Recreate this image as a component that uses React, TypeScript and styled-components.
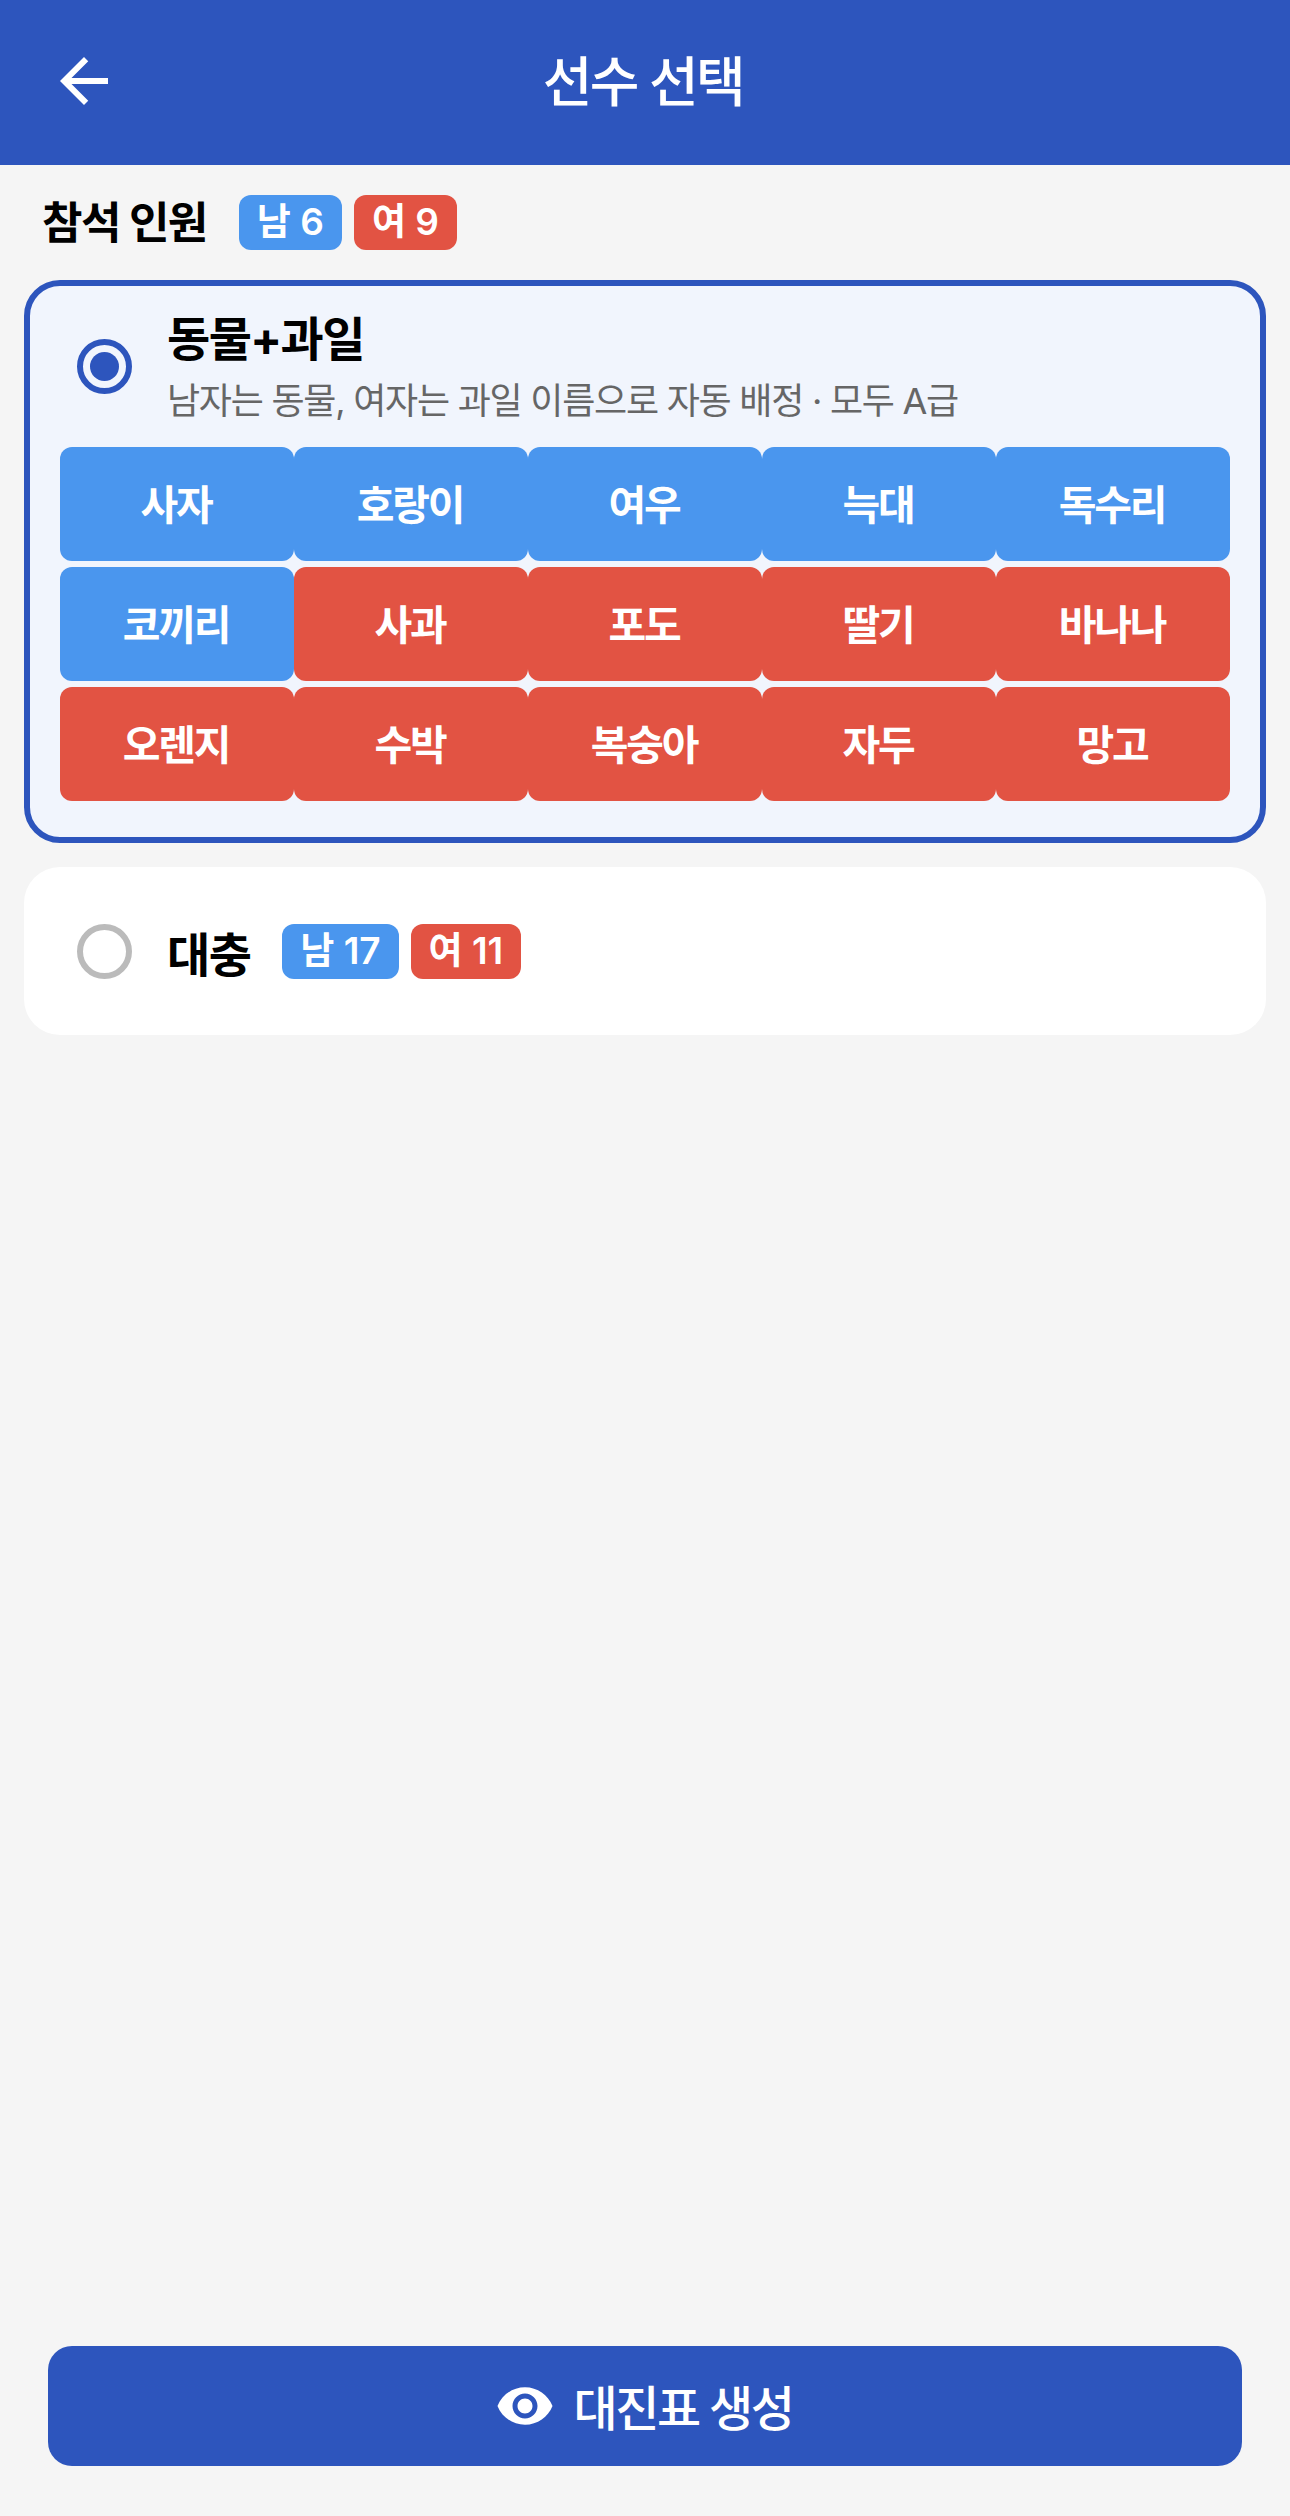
import React from "react";
import styled, { createGlobalStyle } from "styled-components";
import { MdArrowBack, MdVisibility } from "react-icons/md";

const PRIMARY = "#2d55bd";
const MALE = "#4a96ee";
const FEMALE = "#e25343";

const Global = createGlobalStyle`
  html, body { margin: 0; padding: 0; }
  body {
    background: #f5f5f5;
    font-family: Inter, "Noto Sans CJK KR", "Noto Sans", sans-serif;
  }
`;

const Screen = styled.div`
  width: 1290px;
  height: 2516px;
  display: flex;
  flex-direction: column;
  background: #f5f5f5;
  overflow: hidden;
`;

const Header = styled.header`
  height: 165px;
  box-sizing: border-box;
  padding: 0 48px 3px;
  background: ${PRIMARY};
  display: grid;
  grid-template-columns: 72px 1fr 72px;
  align-items: center;
  color: #fff;
`;

const BackIcon = styled(MdArrowBack)`
  display: block;
  width: 72px;
  height: 72px;
`;

const HeaderTitle = styled.h1`
  margin: 0;
  padding: 3px 4px 0 0;
  font-size: 54px;
  font-weight: 500;
  letter-spacing: -2.5px;
  line-height: 72px;
  text-align: center;
`;

const Summary = styled.div`
  height: 115px;
  box-sizing: border-box;
  padding: 0 42px;
  display: flex;
  align-items: center;
`;

const SummaryLabel = styled.span`
  margin-right: 32px;
  padding-bottom: 6px;
  font-size: 44px;
  font-weight: 700;
  letter-spacing: -1.5px;
  color: #000;
`;

const Badges = styled.div`
  display: flex;
  gap: 12px;
`;

const Badge = styled.span<{ $tone: "male" | "female" }>`
  padding: 0 18px;
  height: 55px;
  border-radius: 12px;
  background: ${(p) => (p.$tone === "male" ? MALE : FEMALE)};
  color: #fff;
  font-size: 37px;
  font-weight: 600;
  line-height: 53px;
  white-space: nowrap;
`;

const List = styled.div`
  padding: 0 24px;
  display: flex;
  flex-direction: column;
  gap: 24px;
`;

const SelectedCard = styled.section`
  height: 563px;
  box-sizing: border-box;
  padding: 0 30px;
  border: 6px solid ${PRIMARY};
  border-radius: 36px;
  background: #f1f5fd;
  display: flex;
  flex-direction: column;
`;

const CardHead = styled.div`
  height: 161px;
  padding-left: 17px;
  display: flex;
  align-items: center;
  gap: 35px;
`;

const Radio = styled.span<{ $on?: boolean }>`
  flex: none;
  width: 55px;
  height: 55px;
  box-sizing: border-box;
  border-radius: 50%;
  border: 6px solid ${(p) => (p.$on ? PRIMARY : "#bbbbbb")};
  display: flex;
  align-items: center;
  justify-content: center;
  &::after {
    content: "";
    display: ${(p) => (p.$on ? "block" : "none")};
    width: 29px;
    height: 29px;
    border-radius: 50%;
    background: ${PRIMARY};
  }
`;

const CardTitle = styled.div`
  font-size: 47px;
  font-weight: 700;
  letter-spacing: -1.6px;
  line-height: 62px;
  margin-bottom: 6px;
  color: #000;
`;

const CardDesc = styled.div`
  font-size: 36px;
  letter-spacing: -1.25px;
  line-height: 50px;
  color: #666;
  font-weight: 400;
  white-space: nowrap;
`;

const Grid = styled.div`
  display: grid;
  grid-template-columns: repeat(5, 234px);
  grid-auto-rows: 114px;
  row-gap: 6px;
`;

const Chip = styled.div<{ $tone: "male" | "female" }>`
  box-sizing: border-box;
  padding: 0 2px 5px 0;
  border-radius: 12px;
  background: ${(p) => (p.$tone === "male" ? MALE : FEMALE)};
  color: #fff;
  font-size: 41px;
  font-weight: 600;
  letter-spacing: -2.2px;
  display: flex;
  align-items: center;
  justify-content: center;
`;

const PlainCard = styled.section`
  height: 168px;
  box-sizing: border-box;
  padding: 0 53px;
  border-radius: 36px;
  background: #fff;
  display: flex;
  align-items: center;
`;

const PlainTitle = styled.span`
  margin-left: 35px;
  margin-right: 32px;
  font-size: 47px;
  font-weight: 700;
  letter-spacing: -1.6px;
  color: #000;
`;

const Footer = styled.div`
  margin-top: auto;
  padding: 0 48px 50px;
`;

const PrimaryButton = styled.button`
  width: 100%;
  height: 120px;
  padding: 0 2px 3px 0;
  border: 0;
  border-radius: 24px;
  background: ${PRIMARY};
  color: #fff;
  font: inherit;
  font-size: 48px;
  font-weight: 500;
  letter-spacing: -2.4px;
  display: flex;
  align-items: center;
  justify-content: center;
  gap: 18px;
`;

const EyeIcon = styled(MdVisibility)`
  display: block;
  width: 60px;
  height: 60px;
  margin-top: 2px;
`;

const male = ["사자", "호랑이", "여우", "늑대", "독수리", "코끼리"];
const female = ["사과", "포도", "딸기", "바나나", "오렌지", "수박", "복숭아", "자두", "망고"];

export default function App() {
  return (
    <Screen>
      <Global />
      <Header>
        <BackIcon />
        <HeaderTitle>선수 선택</HeaderTitle>
      </Header>
      <Summary>
        <SummaryLabel>참석 인원</SummaryLabel>
        <Badges>
          <Badge $tone="male">남 6</Badge>
          <Badge $tone="female">여 9</Badge>
        </Badges>
      </Summary>
      <List>
        <SelectedCard>
          <CardHead>
            <Radio $on />
            <div>
              <CardTitle>동물+과일</CardTitle>
              <CardDesc>남자는 동물, 여자는 과일 이름으로 자동 배정 · 모두 A급</CardDesc>
            </div>
          </CardHead>
          <Grid>
            {male.map((n) => (
              <Chip key={n} $tone="male">{n}</Chip>
            ))}
            {female.map((n) => (
              <Chip key={n} $tone="female">{n}</Chip>
            ))}
          </Grid>
        </SelectedCard>
        <PlainCard>
          <Radio />
          <PlainTitle>대충</PlainTitle>
          <Badges>
            <Badge $tone="male">남 17</Badge>
            <Badge $tone="female">여 11</Badge>
          </Badges>
        </PlainCard>
      </List>
      <Footer>
        <PrimaryButton>
          <EyeIcon />
          대진표 생성
        </PrimaryButton>
      </Footer>
    </Screen>
  );
}
